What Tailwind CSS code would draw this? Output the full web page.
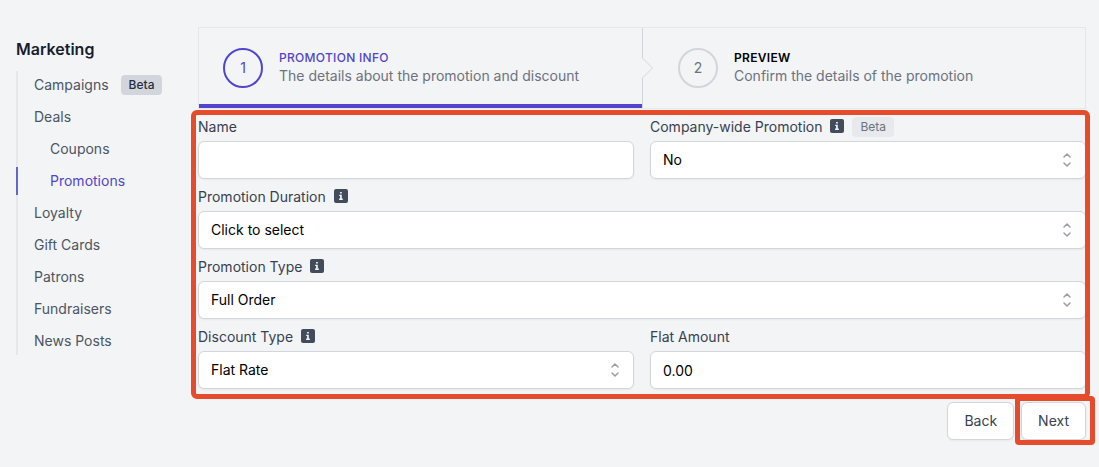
<!DOCTYPE html>
<html lang="en">
<head>
  <meta charset="UTF-8" />
  <meta name="viewport" content="width=device-width, initial-scale=1.0" />
  <title>Marketing - Promotions</title>
  <script src="https://cdn.jsdelivr.net/npm/@tailwindcss/browser@4"></script>
</head>
<body class="bg-[#f3f4f6] min-h-screen font-['Inter',sans-serif] text-sm text-[#374151]">
  <svg class="hidden">
    <symbol id="info" viewBox="0 0 14 14">
      <rect width="14" height="14" rx="2" fill="#434c5a" />
      <path d="M6.1 3h1.7v1.6H6.1zM5.2 5.7h2.6v3.8h1V11H5.1V9.5h1V7.1h-.9z" fill="#f3f4f6" />
    </symbol>
    <symbol id="updown" viewBox="0 0 20 20">
      <path d="M7 7l3-3 3 3m0 6l-3 3-3-3" fill="none" stroke="#9a9da3" stroke-width="1.5" stroke-linecap="round" stroke-linejoin="round" />
    </symbol>
  </svg>

  <div class="flex pl-4 pr-[13px] pt-[27px]">
    <!-- Sidebar -->
    <nav class="w-[182px] shrink-0 pt-[10px]" aria-label="Marketing">
      <h2 class="text-base leading-6 font-semibold text-[#161e2e]">Marketing</h2>
      <ul class="mt-[10px] flex flex-col gap-1 border-l-2 border-[#e5e7eb] text-[#4b5563]">
        <li class="flex items-center h-7 pl-4"><a href="#">Campaigns</a><span class="ml-3 rounded bg-[#d2d6dc] px-2 text-xs leading-5 font-medium text-[#252f3f]">Beta</span></li>
        <li class="flex items-center h-7 pl-4"><a href="#">Deals</a></li>
        <li class="flex items-center h-7 pl-8"><a href="#">Coupons</a></li>
        <li class="flex items-center h-7 pl-8 -ml-[2px] border-l-2 border-[#6366c8] text-[#5145cd]"><a href="#" aria-current="page">Promotions</a></li>
        <li class="flex items-center h-7 pl-4"><a href="#">Loyalty</a></li>
        <li class="flex items-center h-7 pl-4"><a href="#">Gift Cards</a></li>
        <li class="flex items-center h-7 pl-4"><a href="#">Patrons</a></li>
        <li class="flex items-center h-7 pl-4"><a href="#">Fundraisers</a></li>
        <li class="flex items-center h-7 pl-4"><a href="#">News Posts</a></li>
      </ul>
    </nav>

    <main class="flex-1 min-w-0">
      <!-- Steps -->
      <ol class="grid grid-cols-2 border border-[#e5e7eb]">
        <li class="flex items-center gap-4 h-20 pl-6 border-b-4 border-[#5145cd] pt-1">
          <span class="flex size-10 shrink-0 items-center justify-center rounded-full border-2 border-[#5145cd] text-[#5145cd]">1</span>
          <span class="flex flex-col">
            <span class="text-xs leading-4 font-medium tracking-wide uppercase text-[#5145cd]">Promotion Info</span>
            <span class="leading-5 text-[#6b7280]">The details about the promotion and discount</span>
          </span>
        </li>
        <li class="relative flex items-center gap-4 h-20 pl-9">
          <svg class="absolute left-0 top-0 h-full w-3" viewBox="0 0 12 80" fill="none" stroke="#d2d6dc">
            <path d="M.5 0V30L10.500 40L.5 50V80" />
          </svg>
          <span class="flex size-10 shrink-0 items-center justify-center rounded-full border-2 border-[#d2d6dc] text-[#6b7280]">2</span>
          <span class="flex flex-col">
            <span class="text-xs leading-4 font-semibold tracking-wide uppercase text-black">Preview</span>
            <span class="leading-5 text-[#6b7280]">Confirm the details of the promotion</span>
          </span>
        </li>
      </ol>

      <form>
        <!-- Promotion fields -->
        <div class="relative mt-2 grid grid-cols-2 gap-x-4 gap-y-2">
          <div>
            <label for="name" class="flex items-center h-5">Name</label>
            <input id="name" type="text" class="mt-1 block h-[38px] w-full rounded-md border border-[#d2d6dc] bg-white px-3 text-black shadow-xs" />
          </div>
          <div>
            <div class="flex items-center h-5">
              <label for="company">Company-wide Promotion</label>
              <svg class="ml-2 mb-[2px] size-[14px]"><use href="#info" /></svg>
              <span class="ml-2 rounded bg-[#e8e9ed] px-2 text-xs leading-5 text-[#6b7280]">Beta</span>
            </div>
            <div class="relative mt-1">
              <select id="company" class="block h-[38px] w-full appearance-none rounded-md border border-[#d2d6dc] bg-white px-3 text-black shadow-xs"><option>No</option></select>
              <svg class="pointer-events-none absolute right-[9px] top-[9px] size-5"><use href="#updown" /></svg>
            </div>
          </div>
          <div class="col-span-2">
            <div class="flex items-center h-5">
              <label for="duration">Promotion Duration</label>
              <svg class="ml-2 mb-[2px] size-[14px]"><use href="#info" /></svg>
            </div>
            <div class="relative mt-1">
              <select id="duration" class="block h-[38px] w-full appearance-none rounded-md border border-[#d2d6dc] bg-white px-3 text-black shadow-xs"><option>Click to select</option></select>
              <svg class="pointer-events-none absolute right-[9px] top-[9px] size-5"><use href="#updown" /></svg>
            </div>
          </div>
          <div class="col-span-2">
            <div class="flex items-center h-5">
              <label for="type">Promotion Type</label>
              <svg class="ml-2 mb-[2px] size-[14px]"><use href="#info" /></svg>
            </div>
            <div class="relative mt-1">
              <select id="type" class="block h-[38px] w-full appearance-none rounded-md border border-[#d2d6dc] bg-white px-3 text-black shadow-xs"><option>Full Order</option></select>
              <svg class="pointer-events-none absolute right-[9px] top-[9px] size-5"><use href="#updown" /></svg>
            </div>
          </div>
          <div>
            <div class="flex items-center h-5">
              <label for="discount">Discount Type</label>
              <svg class="ml-2 mb-[2px] size-[14px]"><use href="#info" /></svg>
            </div>
            <div class="relative mt-1">
              <select id="discount" class="block h-[38px] w-full appearance-none rounded-md border border-[#d2d6dc] bg-white px-3 text-black shadow-xs"><option>Flat Rate</option></select>
              <svg class="pointer-events-none absolute right-[9px] top-[9px] size-5"><use href="#updown" /></svg>
            </div>
          </div>
          <div>
            <label for="amount" class="flex items-center h-5">Flat Amount</label>
            <input id="amount" type="text" value="0.00" class="mt-1 block h-[38px] w-full rounded-md border border-[#d2d6dc] bg-white px-3 text-black shadow-xs" />
          </div>
          <div class="pointer-events-none absolute -left-[7px] -right-1 -top-[7px] -bottom-[10px] rounded-md border-5 border-[#e64c2b]"></div>
        </div>

        <!-- Actions -->
        <div class="mt-[13px] flex justify-end gap-[7px]">
          <button type="button" class="h-[38px] rounded-md border border-[#d2d6dc] bg-white px-4 shadow-xs">Back</button>
          <div class="relative">
            <button type="submit" class="h-[38px] rounded-md border border-[#d2d6dc] bg-white px-4 shadow-xs">Next</button>
            <div class="pointer-events-none absolute -left-[6px] -right-[9px] -top-[6px] -bottom-[5px] rounded border-5 border-[#e64c2b]"></div>
          </div>
        </div>
      </form>
    </main>
  </div>
</body>
</html>
